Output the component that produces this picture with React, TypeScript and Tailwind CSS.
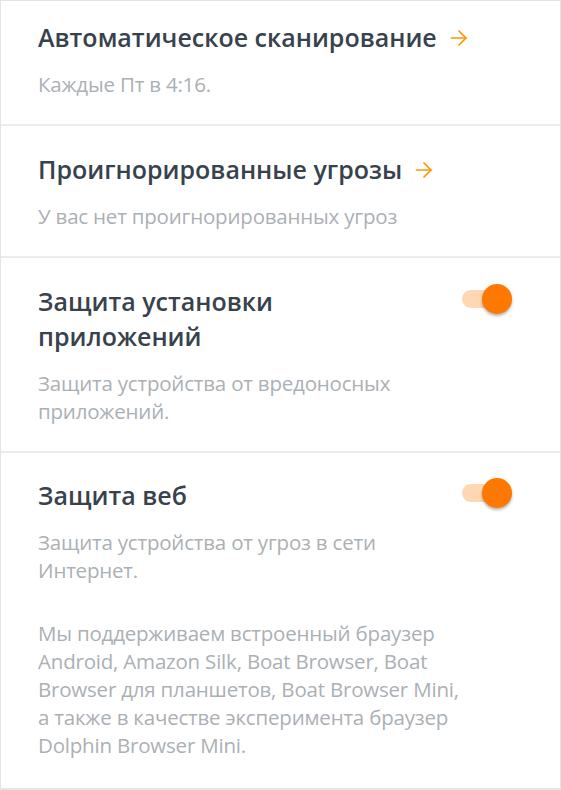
function Toggle() {
  return (
    <div className="relative w-[50px] h-[30px] shrink-0 flex items-center">
      <div className="w-[48px] h-[18px] rounded-full bg-[#ffd7b3]" />
      <div className="absolute right-0 top-0 w-[30px] h-[30px] rounded-full bg-[#ff7800] shadow-[0_2px_3px_rgba(0,0,0,0.3)]" />
    </div>
  )
}

// thin orange arrow next to link titles
function Arrow() {
  return (
    <svg width="18" height="18" viewBox="0 0 18 18" fill="none" stroke="#ff9500" strokeWidth="1.7" strokeLinecap="round" strokeLinejoin="round">
      <path d="M1.5 9h14.5" />
      <path d="M9 2l7 7-7 7" />
    </svg>
  )
}

export default function App() {
  return (
    <div
      className="w-[561px] h-[790px] bg-white border-x border-[#e4e4e4] border-t border-b-2 text-[#38424c] overflow-hidden"
      style={{ fontFamily: '"Open Sans", "Noto Sans", sans-serif' }}
    >
      {/* auto scan */}
      <div className="px-[37px] pt-[19px] pb-[26px] border-b-2 border-[#ececec]">
        <div className="flex items-center gap-[13px] text-[25px] font-semibold leading-[35px]">
          Автоматическое сканирование
          <Arrow />
        </div>
        <div className="mt-[15px] text-[20.5px] tracking-[-0.2px] leading-[28px] text-[#abb0b5]">Каждые Пт в 4:16.</div>
      </div>

      {/* ignored threats */}
      <div className="px-[37px] pt-[26px] pb-[26px] border-b-2 border-[#ececec]">
        <div className="flex items-center gap-[13px] text-[25px] font-semibold leading-[35px]">
          Проигнорированные угрозы
          <Arrow />
        </div>
        <div className="mt-[15px] text-[20.5px] tracking-[-0.2px] leading-[28px] text-[#abb0b5]">
          У вас нет проигнорированных угроз
        </div>
      </div>

      {/* app install protection */}
      <div className="pl-[37px] pr-[48px] pt-[26px] pb-[26px] border-b-2 border-[#ececec]">
        <div className="flex items-start justify-between">
          <div className="text-[25px] font-semibold leading-[35px] w-[300px]">
            Защита установки приложений
          </div>
          <Toggle />
        </div>
        <div className="mt-[15px] text-[20.5px] tracking-[-0.2px] leading-[28px] text-[#abb0b5] w-[420px]">
          Защита устройства от вредоносных приложений.
        </div>
      </div>

      {/* web protection */}
      <div className="pl-[37px] pr-[48px] pt-[25px] pb-[28px]">
        <div className="flex items-start justify-between">
          <div className="text-[25px] font-semibold leading-[35px]">Защита веб</div>
          <Toggle />
        </div>
        <div className="mt-[15px] text-[20.5px] tracking-[-0.2px] leading-[28px] text-[#abb0b5] w-[400px]">
          Защита устройства от угроз в сети Интернет.
        </div>
        <div className="mt-[35px] text-[20.5px] tracking-[-0.2px] leading-[28px] text-[#abb0b5] w-[430px]">
          Мы поддерживаем встроенный браузер Android, Amazon Silk, Boat Browser, Boat Browser для
          планшетов, Boat Browser Mini, а также в качестве эксперимента браузер Dolphin Browser Mini.
        </div>
      </div>
    </div>
  )
}
